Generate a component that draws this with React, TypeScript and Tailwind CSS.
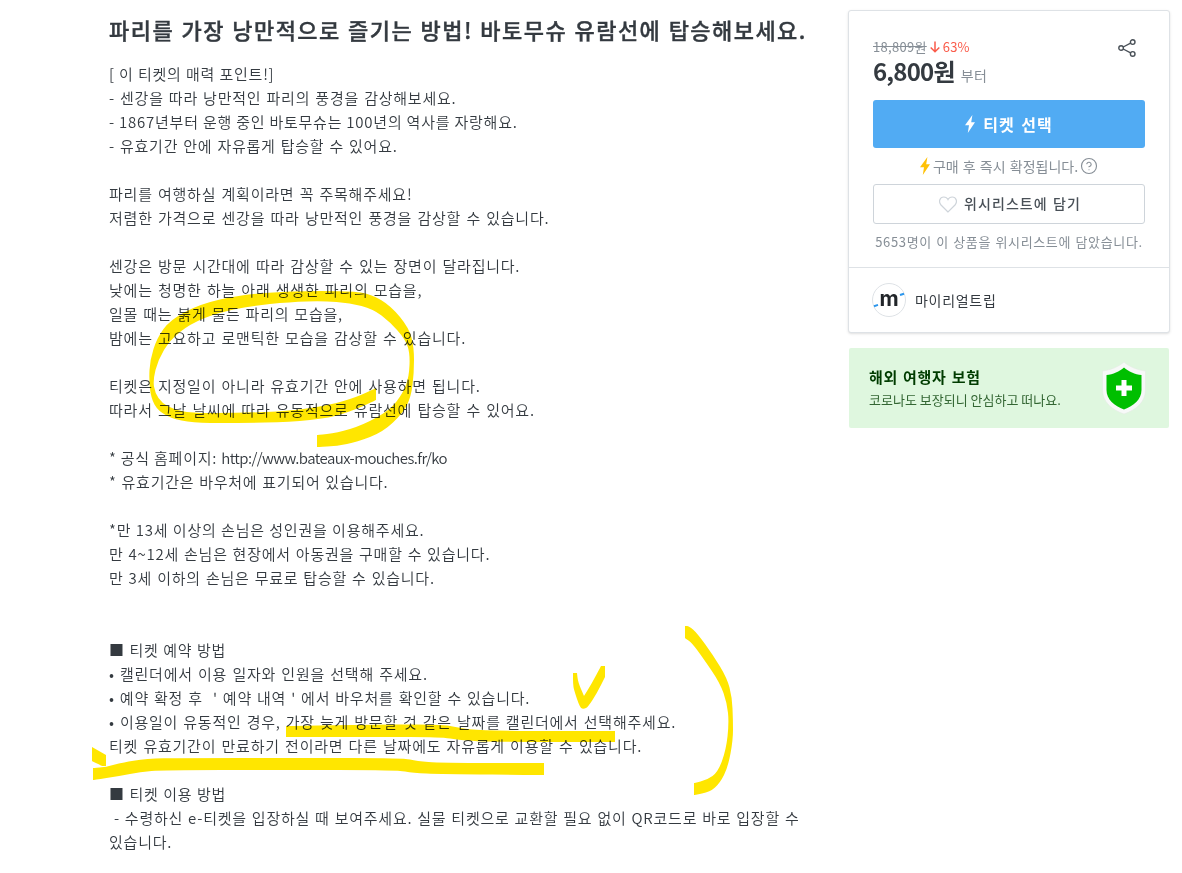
import { CircleHelp } from 'lucide-react';

type Point = [number, number];

interface Line {
  text: string;
  link?: string;
  spacing?: string;
}

const introLines: Line[] = [
  { text: '[ 이 티켓의 매력 포인트!]', spacing: '[word-spacing:0.2px]' },
  { text: '- 센강을 따라 낭만적인 파리의 풍경을 감상해보세요.', spacing: '[word-spacing:1px]' },
  { text: '- 1867년부터 운행 중인 바토무슈는 100년의 역사를 자랑해요.', spacing: '[word-spacing:0px]' },
  { text: '- 유효기간 안에 자유롭게 탑승할 수 있어요.', spacing: '[word-spacing:0.9px]' },
  { text: '' },
  { text: '파리를 여행하실 계획이라면 꼭 주목해주세요!' },
  { text: '저렴한 가격으로 센강을 따라 낭만적인 풍경을 감상할 수 있습니다.' },
  { text: '' },
  { text: '센강은 방문 시간대에 따라 감상할 수 있는 장면이 달라집니다.' },
  { text: '낮에는 청명한 하늘 아래 생생한 파리의 모습을,' },
  { text: '일몰 때는 붉게 물든 파리의 모습을,', spacing: '[word-spacing:0.9px]' },
  { text: '밤에는 고요하고 로맨틱한 모습을 감상할 수 있습니다.' },
  { text: '' },
  { text: '티켓은 지정일이 아니라 유효기간 안에 사용하면 됩니다.' },
  { text: '따라서 그날 날씨에 따라 유동적으로 유람선에 탑승할 수 있어요.' },
  { text: '' },
  { text: '* 공식 홈페이지: ', link: 'http://www.bateaux-mouches.fr/ko', spacing: '[word-spacing:0px]' },
  { text: '* 유효기간은 바우처에 표기되어 있습니다.', spacing: '[word-spacing:0.7px]' },
  { text: '' },
  { text: '*만 13세 이상의 손님은 성인권을 이용해주세요.', spacing: '[word-spacing:0.4px]' },
  { text: '만 4~12세 손님은 현장에서 아동권을 구매할 수 있습니다.', spacing: '[word-spacing:0.8px]' },
  { text: '만 3세 이하의 손님은 무료로 탑승할 수 있습니다.', spacing: '[word-spacing:0.9px]' },
  { text: '' },
  { text: '' },
  { text: '■ 티켓 예약 방법', spacing: '[word-spacing:0.5px]' },
  { text: '• 캘린더에서 이용 일자와 인원을 선택해 주세요.', spacing: '[word-spacing:1.1px]' },
  { text: "• 예약 확정 후  ' 예약 내역 ' 에서 바우처를 확인할 수 있습니다.", spacing: '[word-spacing:0.95px]' },
  { text: '• 이용일이 유동적인 경우, 가장 늦게 방문할 것 같은 날짜를 캘린더에서 선택해주세요.', spacing: '[word-spacing:1px]' },
  { text: '티켓 유효기간이 만료하기 전이라면 다른 날짜에도 자유롭게 이용할 수 있습니다.' },
  { text: '' },
  { text: '■ 티켓 이용 방법', spacing: '[word-spacing:0.5px]' },
  { text: ' - 수령하신 e-티켓을 입장하실 때 보여주세요. 실물 티켓으로 교환할 필요 없이 QR코드로 바로 입장할 수', spacing: '[word-spacing:0.85px]' },
  { text: '있습니다.' },
];

// Outlines of the yellow pen strokes
const strokes: Point[][] = [
  [[376, 400], [376, 400], [357, 409], [330, 418], [290, 422], [240, 423], [200, 423], [175, 420], [158, 411], [151, 398], [149, 380], [150, 360], [157, 338], [170, 320], [200, 304], [240, 295], [290, 291], [350, 291], [371, 294], [391, 306], [409, 328], [414, 347], [414, 373], [411, 397], [403, 413], [383, 432], [357, 442], [337, 446], [317, 447], [317, 447], [317, 435], [317, 435], [337, 433], [363, 425], [390, 410], [403, 393], [409, 377], [410, 353], [405, 339], [390, 322], [373, 309], [350, 303], [323, 301], [290, 302], [250, 306], [217, 313], [190, 324], [170, 340], [158, 360], [153, 380], [155, 393], [162, 403], [173, 409], [190, 413], [240, 413], [290, 411], [330, 405], [357, 397], [376, 388], [376, 388]],
  [[286, 726], [286, 726], [350, 725], [440, 724], [455, 727], [473, 730], [520, 731], [615, 731], [615, 731], [615, 742], [615, 742], [490, 742], [460, 740], [440, 737], [380, 737], [286, 737], [286, 737]],
  [[93, 768], [93, 768], [106, 767], [120, 763], [147, 758.5], [180, 758], [300, 758], [403, 758], [417, 761], [440, 763], [544, 763], [544, 763], [544, 775], [544, 775], [440, 774], [413, 773], [397, 770], [280, 770], [163, 770], [140, 772], [120, 776], [93, 780], [93, 780]],
  [[92, 747], [92, 747], [106, 755], [106, 755], [106, 766], [106, 766], [102, 766], [102, 766], [92, 761], [92, 761]],
  [[573, 673], [573, 673], [577, 673], [577, 673], [578, 682], [584, 696], [584, 696], [592, 683], [601, 666], [601, 666], [605, 666], [605, 666], [605, 677], [605, 677], [597, 693], [588, 707], [584, 709], [580, 708], [574, 690], [573, 684]],
  [[685, 626], [685, 626], [689, 626], [697, 633], [713, 655], [727, 678], [732, 697], [733, 720], [733, 740], [728, 767], [720, 783], [710, 792], [694, 795], [694, 795], [694, 783], [694, 783], [707, 780], [718, 772], [726, 750], [729, 723], [727, 703], [720, 683], [703, 658], [692, 643], [685, 638], [685, 638]],
];

// Rounded closed path through the midpoints, doubled points stay sharp
function toPath(points: Point[]) {
  const mid = (a: Point, b: Point) => `${(a[0] + b[0]) / 2} ${(a[1] + b[1]) / 2}`;
  const last = points[points.length - 1];
  let d = `M${mid(last, points[0])}`;
  points.forEach((p, i) => {
    const next = points[(i + 1) % points.length];
    d += `Q${p[0]} ${p[1]} ${mid(p, next)}`;
  });
  return `${d}Z`;
}

function Bolt({ className }: { className: string }) {
  return (
    <svg className={className} viewBox="0 0 10 18" fill="currentColor">
      <path d="M7.4 0L0 10.200h4L2.800 18 10 7.200H6.200z" />
    </svg>
  );
}

function Description() {
  return (
    <main className="ml-[109px] w-[710px] shrink-0 pt-3.5">
      <h1 className="h-[30px] whitespace-nowrap text-[22px] font-medium leading-[30px] tracking-[1.45px] text-[#343a40] [-webkit-text-stroke:0.4px_#343a40] [word-spacing:1px]">
        파리를 가장 낭만적으로 즐기는 방법! 바토무슈 유람선에 탑승해보세요.
      </h1>
      <div className="mt-[18px] text-[15px] font-[350] leading-6 tracking-[0.77px] text-[#343a40]">
        {introLines.map((line, i) => (
          <p key={i} className={`h-6 whitespace-pre ${line.spacing ?? '[word-spacing:1.15px]'}`}>
            {line.text}
            {line.link && <span className="tracking-[-0.58px]">{line.link}</span>}
          </p>
        ))}
      </div>
    </main>
  );
}

function PriceCard() {
  return (
    <section className="h-[323px] w-[322px] rounded-[3px] border border-[#dee2e6] bg-white shadow-sm">
      <div className="h-[257px] border-b border-[#dee2e6] px-6 pt-[26px]">
        <div className="flex justify-between">
          <div>
            <div className="flex h-5 items-center text-[13px] leading-4">
              <span className="tracking-[0.3px] text-[#868e96] line-through">18,809원</span>
              <svg className="ml-[3px] h-3 w-[10px] text-[#fa5b4a]" viewBox="0 0 10 12" fill="none" stroke="currentColor" strokeWidth="1.5">
                <path d="M5 0.5v10M0.7 6.5L5 10.8l4.3-4.3" />
              </svg>
              <span className="ml-[3px] tracking-[0.2px] text-[#fa5b4a]">63%</span>
            </div>
            <div className="flex h-8 items-baseline">
              <span className="text-2xl font-bold leading-7 tracking-[-0.8px] text-[#343a40]">6,800원</span>
              <span className="ml-1.5 text-sm tracking-[0.5px] text-[#868e96]">부터</span>
            </div>
          </div>
          <svg className="mr-[9px] mt-0.5 h-[18px] w-[18px] text-[#495057]" viewBox="0 0 18 18" fill="none" stroke="currentColor" strokeWidth="1.4">
            <circle cx="3.1" cy="9" r="2.3" />
            <circle cx="14.7" cy="3.1" r="2.3" />
            <circle cx="14.7" cy="14.9" r="2.3" />
            <path d="M5.2 8l7.4-3.8M5.2 10l7.4 3.8" />
          </svg>
        </div>
        <button className="mt-[11px] flex h-12 w-full items-center justify-center gap-2 rounded-[3px] bg-[#51abf3] text-base font-bold text-white">
          <Bolt className="h-[18px] w-[10px]" />
          <span className="tracking-[1px] [word-spacing:2px]">티켓 선택</span>
        </button>
        <div className="mt-2 flex h-5 items-center justify-center text-sm text-[#868e96]">
          <Bolt className="mr-[3px] h-[18px] w-[10px] text-[#ffc107]" />
          <span className="[word-spacing:1px]">구매 후 즉시 확정됩니다.</span>
          <CircleHelp className="ml-0.5 h-[18px] w-[18px]" strokeWidth={1.5} />
        </div>
        <button className="mt-2 flex h-10 w-full items-center justify-center gap-[7px] rounded-[3px] border border-[#ced4da] pb-[3px] pl-[2px] text-sm font-medium text-[#495057]">
          <svg className="mt-[3px] h-[17px] w-[18px] text-[#ced4da]" viewBox="0 0 18 17" fill="none" stroke="currentColor" strokeWidth="1.2">
            <path d="M9 16L2 9C-0.800 5.800 0.800 1 4.800 1 7 1 8.300 2.200 9 3.600 9.700 2.200 11 1 13.200 1 17.200 1 18.800 5.800 16 9z" />
          </svg>
          <span className="tracking-[1.1px] [word-spacing:1px]">위시리스트에 담기</span>
        </button>
        <p className="mt-2 whitespace-nowrap text-center text-[13px] leading-5 tracking-[0.65px] text-[#868e96] [word-spacing:0.8px]">
          5653명이 이 상품을 위시리스트에 담았습니다.
        </p>
      </div>
      <div className="flex h-16 items-center px-[23px]">
        <svg className="h-[34px] w-[34px]" viewBox="0 0 34 34">
          <circle cx="17" cy="17" r="16.5" fill="#fff" stroke="#dee2e6" />
          <path d="M2 23.2l4-1.3M28 12l4-1.3" stroke="#2b96ed" strokeWidth="2" />
          <text x="17" y="22.5" textAnchor="middle" fontSize="21" fontWeight="700" fontFamily="Inter" fill="#212529">m</text>
        </svg>
        <span className="ml-[9px] text-sm tracking-[0.7px] text-[#343a40]">마이리얼트립</span>
      </div>
    </section>
  );
}

function InsuranceBanner() {
  return (
    <section className="ml-px mt-[15px] flex h-20 w-80 items-center justify-between rounded-[2px] bg-[#dff7df] pl-5 pr-[23px]">
      <div className="whitespace-nowrap">
        <h2 className="text-[15px] font-bold leading-6 tracking-[0.7px] text-[#003c00] [word-spacing:1px]">해외 여행자 보험</h2>
        <p className="text-[13px] leading-[22px] text-[#336633]">코로나도 보장되니 안심하고 떠나요.</p>
      </div>
      <svg className="h-[54px] w-[44px]" viewBox="0 0 44 54">
        <path d="M22 1C27 5.500 35 9 43.500 10V29C43.500 41 34 49 22 53 10 49 0.500 41 0.500 29V10C9 9 17 5.500 22 1z" fill="#f7f9f8" stroke="#e4ebe4" strokeWidth="0.6" />
        <path d="M22 6.500C26.500 10.500 33 13.500 39.500 14V29C39.500 38.500 31.500 45 22 48.500 12.500 45 4.500 38.500 4.500 29V14C11 13.500 17.500 10.500 22 6.500z" fill="#00bf00" />
        <path d="M22 19v16M14 27h16" stroke="#fff" strokeWidth="5" />
      </svg>
    </section>
  );
}

export default function App() {
  return (
    <div className="relative flex h-[873px] w-[1182px] overflow-hidden bg-white font-['Noto_Sans_CJK_KR',sans-serif]">
      <Description />
      <aside className="ml-[29px] pt-[10px]">
        <PriceCard />
        <InsuranceBanner />
      </aside>
      {/* Marker drawn over the text */}
      <svg className="pointer-events-none absolute inset-0 h-[873px] w-[1182px] mix-blend-multiply" viewBox="0 0 1182 873">
        {strokes.map((points, i) => (
          <path key={i} d={toPath(points)} fill="#ffe600" />
        ))}
      </svg>
    </div>
  );
}
